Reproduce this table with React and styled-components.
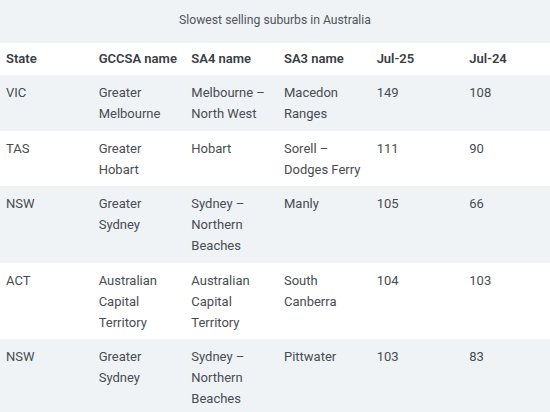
import React from "react";
import styled, { createGlobalStyle } from "styled-components";

const Global = createGlobalStyle`
  html, body { margin: 0; padding: 0; background: #ffffff; }
  body { font-family: Roboto, "Noto Sans", sans-serif; overflow: hidden; }
`;

const Wrap = styled.div`
  width: 550px;
  overflow: hidden;
`;

const Table = styled.table`
  border-collapse: collapse;
  table-layout: fixed;
  width: 556px;
  font-size: 13px;
  line-height: 21px;
  color: #474c53;
`;

const Caption = styled.caption`
  background: #f0f3f6;
  color: #50555c;
  font-size: 12.2px;
  height: 43px;
  line-height: 40px;
  text-align: center;
  padding: 0;
  width: 550px;
`;

const Row = styled.tr`
  background: ${(p) => (p.$shade ? "#f0f3f6" : "#ffffff")};
`;

const Th = styled.th`
  text-align: left;
  font-weight: 600;
  color: #383d44;
  padding: 5px 6px 6px 6px;
  vertical-align: top;
`;

const Td = styled.td`
  padding: 7px 6px 6.6px 6px;
  vertical-align: top;
`;

const Col = styled.col`
  width: 92.6px;
`;

const headers = ["State", "GCCSA name", "SA4 name", "SA3 name", "Jul-25", "Jul-24"];

const rows = [
  ["VIC", "Greater Melbourne", "Melbourne – North West", "Macedon Ranges", "149", "108"],
  ["TAS", "Greater Hobart", "Hobart", "Sorell – Dodges Ferry", "111", "90"],
  ["NSW", "Greater Sydney", "Sydney – Northern Beaches", "Manly", "105", "66"],
  ["ACT", "Australian Capital Territory", "Australian Capital Territory", "South Canberra", "104", "103"],
  ["NSW", "Greater Sydney", "Sydney – Northern Beaches", "Pittwater", "103", "83"],
];

export default function App() {
  return (
    <Wrap>
      <Global />
      <Table>
        <Caption>Slowest selling suburbs in Australia</Caption>
        <colgroup>
          {headers.map((h) => (
            <Col key={h} />
          ))}
        </colgroup>
        <thead>
          <Row>
            {headers.map((h) => (
              <Th key={h}>{h}</Th>
            ))}
          </Row>
        </thead>
        <tbody>
          {rows.map((r, i) => (
            <Row key={i} $shade={i % 2 === 0}>
              {r.map((c, j) => (
                <Td key={j}>{c}</Td>
              ))}
            </Row>
          ))}
        </tbody>
      </Table>
    </Wrap>
  );
}
